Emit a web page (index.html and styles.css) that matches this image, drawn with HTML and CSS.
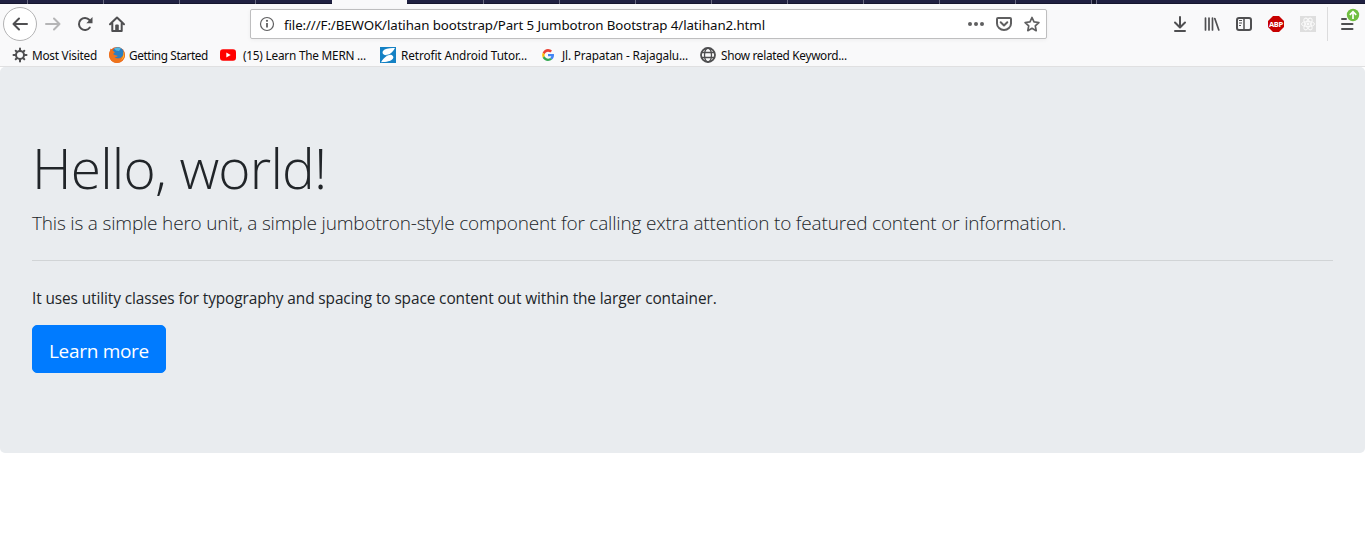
FILE: index.html
```html
<!DOCTYPE html>
<html lang="en">
<head>
<meta charset="utf-8">
<title>Hello, world!</title>
<link rel="stylesheet" href="styles.css">
</head>
<body>
<div class="tabstrip">
  <i class="tab first"></i><i class="tab"></i><i class="tab"></i><i class="tab"></i><i class="tab plain"></i><i class="tab active"></i><i class="tab"></i><i class="tab"></i><i class="tab"></i><i class="tab"></i><i class="tab"></i><i class="tab"></i><i class="tab"></i><i class="tab"></i><i class="tab"></i><i class="tab end"></i>
</div>
<header class="chrome">
  <nav class="toolbar">
    <span class="back"><svg class="icon" viewBox="0 0 16 16"><path d="M15 8H1.500M7 2.500 1.500 8 7 13.500" class="stroke"/></svg></span>
    <svg class="icon forward" viewBox="0 0 16 16"><path d="M1 8h13.500M9 2.500l5.500 5.500L9 13.500" class="stroke"/></svg>
    <svg class="icon reload" viewBox="0 0 16 16"><path d="M12.800 11.500A6 6 0 1 1 12.500 4" class="stroke"/><path d="M15.500 1v6.200H9.300z" fill="currentColor"/></svg>
    <svg class="icon home" viewBox="0 0 16 16"><path d="M1 8.300 8 1.500l7 6.800M3.300 7.500V15h9.400V7.500" class="stroke"/><path d="M6.200 15V9.500q0-1 1-1h1.600q1 0 1 1V15z" fill="currentColor"/></svg>
    <div class="urlbar">
      <svg class="icon info" viewBox="0 0 16 16"><circle cx="8" cy="8" r="6.500" fill="none" stroke="currentColor" stroke-width="1.200"/><path d="M8 7v4.500" stroke="currentColor" stroke-width="1.800"/><circle cx="8" cy="4.800" r="1.100" fill="currentColor"/></svg>
      <span class="url">file:///F:/BEWOK/latihan bootstrap/Part 5 Jumbotron Bootstrap 4/latihan2.html</span>
      <svg class="icon dots" viewBox="0 0 16 16"><g fill="currentColor"><circle cx="2" cy="8" r="2"/><circle cx="8" cy="8" r="2"/><circle cx="14" cy="8" r="2"/></g></svg>
      <svg class="icon pocket" viewBox="0 0 16 16"><path d="M2 2h12q1 0 1 1v4.500a7 6.500 0 0 1-14 0V3q0-1 1-1zM4.700 6.300 8 9.500l3.300-3.200" class="stroke"/></svg>
      <svg class="icon star" viewBox="0 0 16 16"><path d="m8 1.500 2 4.400 4.900.6-3.600 3.300.9 4.900L8 12.300l-4.200 2.400.9-4.900L1.100 6.500 6 5.900z" class="stroke thin"/></svg>
    </div>
    <div class="actions">
      <svg class="icon" viewBox="0 0 16 16"><path d="M8 1v10M3 6.500l5 5 5-5M3 15h10" class="stroke"/></svg>
      <svg class="icon" viewBox="0 0 16 16"><path d="M1.500 2v12M5 2v12M8.500 2v12M10.800 2.500l4 11.500" class="stroke thin"/></svg>
      <svg class="icon" viewBox="0 0 16 16"><rect x="1" y="2" width="14" height="12" rx="2" class="stroke"/><path d="M8 2v12" stroke="currentColor" stroke-width="1.500"/><path d="M3 4.500h3M3 7h3M3 9.500h2" stroke="currentColor"/></svg>
      <svg class="icon" viewBox="0 0 16 16"><path d="M5 0h6l5 5v6l-5 5H5l-5-5V5z" fill="#c70000"/><text x="8" y="10.800" class="abp">ABP</text></svg>
      <svg class="icon" viewBox="0 0 16 16"><path d="M0 0h16v16H0z" fill="#dedede"/><g fill="none" stroke="#fafafa"><ellipse cx="8" cy="8" rx="6.500" ry="2.600"/><ellipse cx="8" cy="8" rx="6.500" ry="2.600" transform="rotate(60 8 8)"/><ellipse cx="8" cy="8" rx="6.500" ry="2.600" transform="rotate(120 8 8)"/></g><circle cx="8" cy="8" r="1.400" fill="#fafafa"/></svg>
    </div>
    <div class="menu">
      <svg class="icon" viewBox="0 0 16 16"><path d="M2 3h4M2 8h10.500M2 13h10.500" class="stroke"/></svg>
      <svg class="badge" viewBox="0 0 14 14"><circle cx="7" cy="7" r="6.200" fill="#70bf41"/><path d="M7 11V4M3.800 6.800 7 3.600l3.200 3.200" fill="none" stroke="#fff" stroke-width="1.700"/></svg>
    </div>
  </nav>
  <nav class="bookmarks">
    <a class="b1"><svg class="icon" viewBox="0 0 16 16"><circle cx="8" cy="8" r="4" class="stroke"/><path d="M8 1.500v2M8 12.500v2M1.500 8h2M12.500 8h2M3.700 3.700l1 1M11.300 11.300l1 1M12.300 3.700l-1 1M4.700 11.300l-1 1" class="stroke"/></svg><span>Most Visited</span></a>
    <a class="b2"><svg class="icon" viewBox="0 0 16 16"><circle cx="8" cy="8" r="8" fill="#e8601c"/><circle cx="9" cy="6" r="5.800" fill="#2a7fc1"/><path d="M5 1.500Q8-.5 12 1.200L10 4 7 3.500z" fill="#53b7df"/><path d="M1.500 1.500Q1 4 0 7q0 7 7 9 7 0 9-7Q16 6 14.500 4q.5 5-3 7-4 1.500-6-1 2 .5 3.500-1L4.500 7.500Q4 6 6 5.500 4 3.500 1.500 1.500z" fill="#ee731c"/><path d="M14.500 4q1.500 5-1 8-3 3-7 2.500 5 .5 7-3.500 1.500-3 1-7z" fill="#ffd13b"/></svg><span>Getting Started</span></a>
    <a class="b3"><svg class="icon" viewBox="0 0 16 16"><rect y="2.300" width="16" height="11.400" rx="3" fill="red"/><path d="m6.300 5.500 4.400 2.500-4.400 2.500z" fill="#fff"/></svg><span>(15) Learn The MERN ...</span></a>
    <a class="b4"><svg class="icon" viewBox="0 0 16 16"><path d="M0 0h16v16H0z" fill="#1481c4"/><path d="M15 1C9 .8 5 1.500 3 4c-1.200 2 .3 3.600 2.500 4.300 1.500.4 2.500.2 3.500-.6C11.500 6 13.500 4 15 1z" fill="#fff"/><path d="M1 15.200C7 15 10.500 14.200 12.700 12c1.500-2 .3-3.600-1.700-4.300-1.500-.4-2.600 0-3.700.8C4.700 10.300 2.500 12.300 1 15.200z" fill="#fff"/><path d="M5 8.700 11.500 7" stroke="#1481c4" stroke-width=".7"/></svg><span>Retrofit Android Tutor...</span></a>
    <a class="b5"><svg class="icon" viewBox="0 0 48 48"><path fill="#ea4335" d="M24 14c3 0 5 1 7 2.500l5-5C33 8.500 29 6 24 6 17 6 11 10.500 8 17l6 4.500c1.500-4.500 5.500-7.500 10-7.500z"/><path fill="#4285f4" d="M42 24.500c0-1.500 0-2.500-.3-3.500H24v7h10c-.5 2.500-1.800 4-3.500 5.300l5.500 4.500c3.500-3.300 6-8 6-13.300z"/><path fill="#fbbc05" d="M14 28a11 11 0 0 1 0-7l-6-4a18 18 0 0 0 0 15.500z"/><path fill="#34a853" d="M24 42c4.700 0 9-1.500 12-4.200l-5.500-4.500c-5 3.500-14 2-16.500-5.300l-6 4.500C11 38 17 42 24 42z"/></svg><span>Jl. Prapatan - Rajagalu...</span></a>
    <a class="b6"><svg class="icon" viewBox="0 0 16 16"><g fill="none" stroke="currentColor" stroke-width="1.300"><circle cx="8" cy="8" r="7" stroke-width="1.800"/><ellipse cx="8" cy="8" rx="3.500" ry="7"/><path d="M1.500 5.500h13M1.500 10.500h13"/></g></svg><span>Show related Keyword...</span></a>
  </nav>
</header>
<main class="jumbotron">
  <h1 class="display-4">Hello, world!</h1>
  <p class="lead">This is a simple hero unit, a simple jumbotron-style component for calling extra attention to featured content or information.</p>
  <hr class="rule">
  <p class="text">It uses utility classes for typography and spacing to space content out within the larger container.</p>
  <a class="btn">Learn more</a>
</main>
</body>
</html>
```
FILE: styles.css
```css
* { box-sizing: border-box; }
body { margin: 0; background: #fff; color: #212529; font-family: "Open Sans", "Noto Sans", sans-serif; font-size: 16px; line-height: 1.5; }
.tabstrip { display: flex; height: 4px; background: linear-gradient(#202142 3px, #15162e 3px); overflow: hidden; }
.tab { flex: none; width: 76px; border-right: 1px solid #696a80; }
.tab.first { width: 28px; }
.tab.plain { border-right: 0; }
.tab.active { width: 75px; margin-right: 1px; border-right: 0; background: #f9f9fa; }
.tab.end { width: 5px; background: #15162c; }
.chrome { height: 63px; background: #f9f9fa; border-bottom: 1px solid #e0e0e1; color: #4f4f51; font-family: "Noto Sans", "Open Sans", sans-serif; }
.icon { display: block; flex: none; width: 16px; height: 16px; overflow: visible; }
.stroke { fill: none; stroke: currentColor; stroke-width: 2; stroke-linecap: round; stroke-linejoin: round; }
.stroke.thin { stroke-width: 1.700; }
.toolbar { display: flex; align-items: center; height: 40px; padding-left: 3px; }
.back { display: flex; align-items: center; justify-content: center; width: 34px; height: 34px; border: 1px solid #b3b3b4; border-radius: 50%; background: #fff; }
.forward { margin-left: 8px; color: #b5b5b6; }
.reload { margin-left: 16px; }
.home { margin-left: 16px; }
.urlbar { display: flex; align-items: center; width: 797px; height: 30px; margin-left: 125px; padding: 0 6px 0 8px; border: 1px solid #bebebf; border-radius: 2px; background: #fff; box-shadow: 0 1px 4px rgba(0,0,0,.05); color: #5f5f60; }
.url { flex: 1; margin-left: 9px; padding-top: 2px; color: #0c0c0d; font-size: 13.300px; line-height: 20px; letter-spacing: -.095px; white-space: nowrap; }
.pocket { margin-left: 12px; }
.star { margin-left: 12px; }
.actions { display: flex; gap: 16px; margin-left: 125px; }
.abp { fill: #fff; font: bold 7.500px "Open Sans", sans-serif; letter-spacing: -.3px; text-anchor: middle; }
.menu { position: relative; display: flex; align-items: center; height: 34px; margin-left: 11px; padding-left: 12px; border-left: 1px solid #dcdcdd; }
.badge { position: absolute; left: 18px; top: 1px; width: 14px; height: 14px; }
.bookmarks { display: flex; align-items: center; height: 21px; padding-left: 12px; font-size: 11.800px; line-height: 16px; white-space: nowrap; }
.bookmarks a { display: flex; align-items: center; gap: 5px; flex: none; width: 160px; color: #0c0c0d; }
.bookmarks .icon { color: #4f4f51; }
.bookmarks .b1 { width: 97px; gap: 4px; letter-spacing: -.24px; }
.bookmarks .b2 { width: 111px; gap: 4px; letter-spacing: -.39px; }
.bookmarks .b3 { gap: 7px; letter-spacing: -.22px; }
.bookmarks .b4 { letter-spacing: -.11px; }
.bookmarks .b5 { gap: 6px; letter-spacing: -.16px; }
.bookmarks .b6 { letter-spacing: -.3px; }
.jumbotron { height: 386px; padding: 64px 32px; border-radius: 5px; background: #e9ecef; }
.display-4 { margin: 0 0 8px; padding-top: 7px; font-size: 55px; font-weight: 300; line-height: 60.200px; letter-spacing: -.800px; white-space: nowrap; }
.lead { margin: 0 0 16px; padding-top: 5px; font-size: 19px; font-weight: 300; line-height: 25px; letter-spacing: -.184px; white-space: nowrap; }
.rule { margin: 24px 0; border: 0; border-top: 1px solid rgba(0,0,0,.1); }
.text { margin: 0 0 16px; padding-top: 3px; font-size: 15.400px; line-height: 21px; letter-spacing: -.097px; }
.btn { display: inline-block; padding: 10px 16px 6px; border: 1px solid #007bff; border-radius: 5px; background: #007bff; color: #fff; font-size: 19px; line-height: 30px; letter-spacing: -.3px; }
```
